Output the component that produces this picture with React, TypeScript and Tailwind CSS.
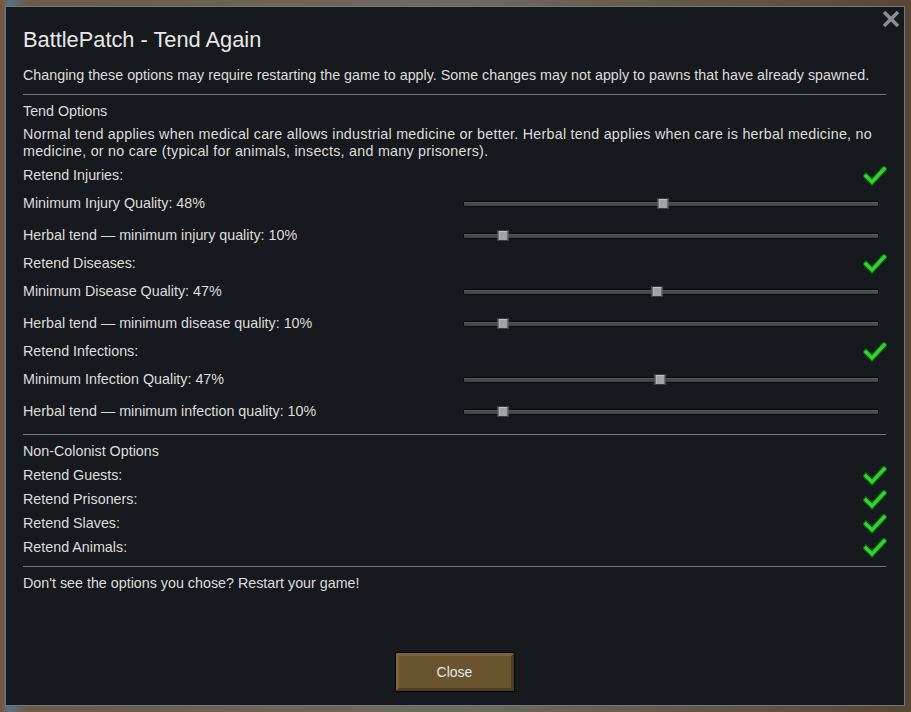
const font = { fontFamily: '"Liberation Sans", Arial, sans-serif' };

function Check() {
  return (
    <svg width="24" height="20" viewBox="0 0 24 20" className="shrink-0">
      <polyline points="3,10 9,16 21,3" fill="none" stroke="#0d5c0d" strokeWidth="6" strokeLinecap="square" />
      <polyline points="3,10 9,16 21,3" fill="none" stroke="#2fd22f" strokeWidth="3.5" strokeLinecap="square" />
    </svg>
  );
}

function Slider({ value }: { value: number }) {
  return (
    <div className="relative mt-[3px] h-[6px] w-[416px] rounded-[2px] border border-[#0b0b0b] bg-[#474747]">
      <div className="h-px w-full bg-[#5a5a5a]" />
      <div
        className="absolute top-[-4px] h-[11px] w-[11px] -translate-x-1/2 border border-[#3a3a3a] bg-[#a3a3a3] shadow-[inset_1px_1px_0_#c4c4c4]"
        style={{ left: `${value}%` }}
      />
    </div>
  );
}

function CheckRow({ label }: { label: string }) {
  return (
    <div className="flex h-[24px] items-center justify-between">
      <span className="pt-[3px]">{label}</span>
      <div className="mr-[-1px] mt-[3px]">
        <Check />
      </div>
    </div>
  );
}

function SliderRow({ label, value }: { label: string; value: number }) {
  return (
    <div className="flex h-[32px] items-center">
      <span className="w-[440px] pt-[3px]">{label}</span>
      <Slider value={value} />
    </div>
  );
}

function Separator({ className = "" }: { className?: string }) {
  return <div className={`h-px bg-[#75797d] ${className}`} />;
}

const groups = [
  { name: "Injuries", sliders: [["Minimum Injury Quality: 48%", 48], ["Herbal tend \u2014 minimum injury quality: 10%", 9.4]] },
  { name: "Diseases", sliders: [["Minimum Disease Quality: 47%", 46.5], ["Herbal tend \u2014 minimum disease quality: 10%", 9.4]] },
  { name: "Infections", sliders: [["Minimum Infection Quality: 47%", 47.3], ["Herbal tend \u2014 minimum infection quality: 10%", 9.4]] },
] as const;

export default function App() {
  return (
    <div
      className="h-[712px] w-[911px] overflow-hidden bg-[linear-gradient(90deg,#7a5234_0%,#5d6f86_1%,#6b5a48_3%,#6f6a60_50%,#5a4634_100%)] pl-[5px] pt-[6px]"
      style={font}
    >
      <div className="relative flex h-[700px] w-[900px] flex-col border border-[#6d7b87] bg-[#16191d] pl-[17px] pr-[18px] text-[14.3px] text-[#dedede]">
        <button className="absolute right-[4px] top-[3px] p-0">
          <svg width="18" height="18" viewBox="0 0 18 18">
            <path d="M2 2 L16 16 M16 2 L2 16" stroke="#8b8e91" strokeWidth="3.5" />
          </svg>
        </button>

        <div className="mt-[19px] text-[21.8px] leading-[28px] text-[#e8e8e8]">BattlePatch - Tend Again</div>
        <div className="mt-[12px] leading-[18px]">
          Changing these options may require restarting the game to apply. Some changes may not apply to pawns that have already spawned.
        </div>
        <Separator className="mt-[10px]" />

        <div className="mt-[3px] flex h-[24px] items-center pt-[3px]">Tend Options</div>
        <div className="mt-[2px] pt-[2px] leading-[17px]">
          <span className="tracking-[0.25px]">
            Normal tend applies when medical care allows industrial medicine or better. Herbal tend applies when care is herbal medicine, no
          </span>
          <br />
          <span className="tracking-[0.25px]">medicine, or no care (typical for animals, insects, and many prisoners).</span>
        </div>
        <div className="mt-[2px]">
          {groups.map((g) => (
            <div key={g.name}>
              <CheckRow label={`Retend ${g.name}:`} />
              {g.sliders.map(([label, v]) => (
                <SliderRow key={label} label={label} value={v} />
              ))}
            </div>
          ))}
        </div>
        <Separator className="mt-[8px]" />

        <div className="mt-[3px] flex h-[24px] items-center pt-[3px]">Non-Colonist Options</div>
        {["Guests", "Prisoners", "Slaves", "Animals"].map((n) => (
          <CheckRow key={n} label={`Retend ${n}:`} />
        ))}
        <Separator className="mt-[8px]" />
        <div className="mt-[3px] flex h-[24px] items-center pt-[3px]">Don't see the options you chose? Restart your game!</div>

        <div className="mb-[13px] mt-auto flex justify-center">
          <div className="border border-black">
            <div className="flex h-[38px] w-[118px] items-center justify-center border-[3px] border-b-[#4d3d20] border-l-[#7c6539] border-r-[#4d3d20] border-t-[#7c6539] bg-[#6a5430] text-[14px] text-[#e6e6e6]">
              Close
            </div>
          </div>
        </div>
      </div>
    </div>
  );
}
